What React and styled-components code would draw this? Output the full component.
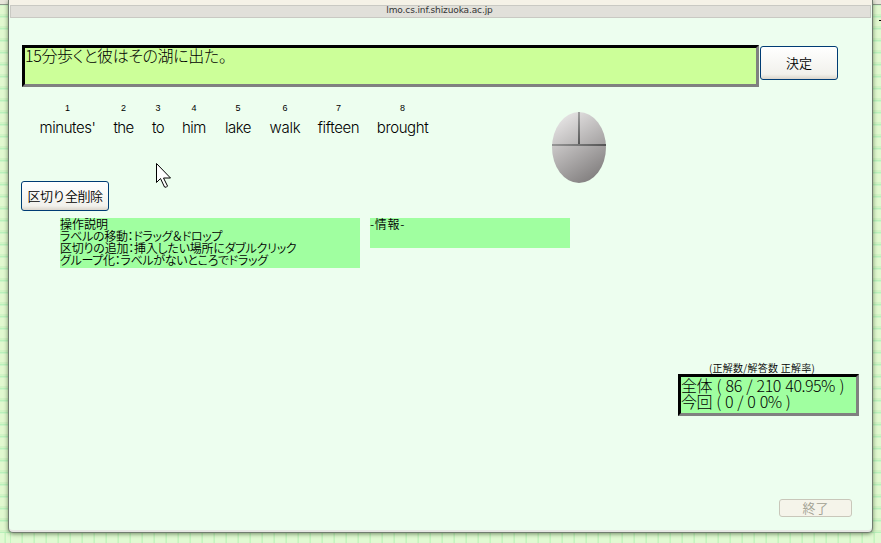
import React from "react";
import styled, { createGlobalStyle } from "styled-components";

const Global = createGlobalStyle`
  * { box-sizing: border-box; }
  html, body { margin: 0; height: 100%; overflow: hidden; }
  body { font-family: "Liberation Sans", "Noto Sans CJK JP", sans-serif; color: #000; }
`;

const Desktop = styled.div`
  height: 543px;
  width: 881px;
  overflow: hidden;
  padding: 0 8px 9px 8px;
  background:
    linear-gradient(#e8e5da, #e8e5da) 0 0 / 100% 4px no-repeat,
    linear-gradient(#8f978b, #8f978b) 0 4px / 100% 1px no-repeat,
    linear-gradient(#000, #000) 879px 20px / 2px 1px no-repeat,
    repeating-linear-gradient(#b9f1bb 0 1px, #cdf5c8 1px 2px, #e1f8cf 2px 10px, #d2f4c5 10px 12px) 0 4px / 100% 529px no-repeat,
    repeating-linear-gradient(90deg, #c4f4bf 0 1px, #e0fad2 1px 11px, #d1f5c5 11px 12px) 10px 0;
`;

const Window = styled.main`
  width: 865px;
  height: 533px;
  display: flex;
  flex-direction: column;
  background: #edfeef;
  border: 1px solid #727c70;
  border-top: 0;
  border-radius: 0 0 5px 5px;
  box-shadow: inset 0 -2px 0 #e6e8e4, 0 1px 4px rgba(50, 80, 40, 0.65);
`;

const TitleStrip = styled.div`height: 5px; background: #f5f2e7; flex: none;`;
const AddressBar = styled.header`
  height: 13px;
  flex: none;
  margin: 0 1px;
  padding: 0 2px 3px 0;
  border: 1px solid #c9c9c3;
  background: #e1e0da;
  display: flex;
  justify-content: center;
  align-items: center;
  color: #333;
`;
const Label = styled.span`
  display: inline-block;
  white-space: nowrap;
  font-family: ${(p) => p.$font || '"Noto Sans CJK JP", sans-serif'};
  font-size: ${(p) => p.$size || 12}px;
  line-height: ${(p) => p.$line || 12}px;
  letter-spacing: ${(p) => p.$track || 0}px;
  word-spacing: ${(p) => p.$gap || 0}px;
  font-weight: ${(p) => p.$weight || 350};
  font-feature-settings: ${(p) => (p.$palt ? '"palt"' : "normal")};
`;

const Inset = styled.div`
  border: 3px solid;
  border-color: #000 #808080 #808080 #000;
  background: ${(p) => p.$fill};
  width: ${(p) => p.$width}px;
  height: 42px;
  display: flex;
  flex-direction: column;
`;
const QuestionRow = styled.section`
  display: flex;
  gap: 1px;
  margin: 27px 0 0 13px;
  align-items: flex-start;
`;
const Button = styled.button`
  padding: 0;
  width: ${(p) => p.$width}px;
  height: ${(p) => p.$height}px;
  margin: ${(p) => p.$margin || 0};
  border: 1px solid #003c74;
  border-radius: 3px;
  background: linear-gradient(#fff, #f2f1ec 85%, #dbd6cc);
  color: #000;
  display: flex;
  align-items: center;
  justify-content: center;
  flex: none;
  &:disabled { border-color: #c9c7ba; background: #f5f4ea; color: #a1a192; }
`;

const WordArea = styled.section`
  display: flex;
  height: 94px;
  padding: 16px 0 0 31px;
  flex: none;
`;
const Words = styled.div`display: flex; gap: 16px; width: 512px;`;
const Word = styled.div`
  width: ${(p) => p.$width}px;
  margin-left: -1px;
  margin-right: 1px;
  display: flex;
  flex-direction: column;
  align-items: center;
`;
const MouseIcon = styled.svg`width: 54px; height: 72px; margin-top: 8px; flex: none;`;
const Pointer = styled.svg`position: absolute; left: 156px; top: 163px; width: 16px; height: 25px;`;

const InfoRow = styled.section`display: flex; gap: 10px; align-items: flex-start; margin: 7px 0 0 51px;`;
const InfoBox = styled.div`
  width: ${(p) => p.$width}px;
  height: ${(p) => p.$height}px;
  background: #a0ffa0;
  display: flex;
  flex-direction: column;
  align-items: flex-start;
`;
const Score = styled.section`
  width: 181px;
  margin: 94px 13px 0 auto;
  display: flex;
  flex-direction: column;
  align-items: flex-start;
`;
const ScoreCaption = styled.div`height: 12px; padding-left: 31px; display: flex;`;
const Footer = styled.footer`display: flex; justify-content: flex-end; padding: 83px 20px 0 0;`;

const latin = '"Liberation Sans", Arial, sans-serif';
const light = 'Inter, "Liberation Sans", sans-serif';

const words = [
  ["minutes'", 57, -0.45], ["the", 23, -0.6], ["to", 14, -0.5], ["him", 26, -0.5],
  ["lake", 30, -0.5], ["walk", 32, -0.2], ["fifteen", 43, -0.35], ["brought", 53, -0.4],
];
const help = [
  ["操作説明", 0],
  ["ラベルの移動：ドラッグ＆ドロップ", -0.3],
  ["区切りの追加：挿入したい場所にダブルクリック", -0.23],
  ["グループ化：ラベルがないところでドラッグ", -0.3],
];

export default function App() {
  return (
    <Desktop>
      <Global />
      <Window>
        <TitleStrip />
        <AddressBar><Label $size={9} $line={10} $weight={400} $font='"DejaVu Sans", sans-serif' $track={-0.12}>lmo.cs.inf.shizuoka.ac.jp</Label></AddressBar>
        <QuestionRow>
          <Inset $fill="#ccff99" $width={737}>
            <Label $size={16} $line={15} $weight={300} $track={-0.35} $palt>15分歩くと彼はその湖に出た。</Label>
          </Inset>
          <Button $width={78} $height={34} $margin="1px 0 0"><Label $size={13}>決定</Label></Button>
        </QuestionRow>
        <WordArea>
          <Words>
            {words.map(([word, width, track], i) => (
              <Word key={word} $width={width}>
                <Label $size={9} $line={11} $font={latin}>{i + 1}</Label>
                <Label $size={15} $line={27} $weight={300} $track={track} $font={light}>{word}</Label>
              </Word>
            ))}
          </Words>
          <MouseIcon viewBox="0 0 54 72">
            <defs>
              <linearGradient id="shell" x1="0.2" y1="0" x2="0.7" y2="1">
                <stop offset="0" stopColor="#eae8e8" /><stop offset="1" stopColor="#817e7e" />
              </linearGradient>
              <linearGradient id="seam" gradientUnits="userSpaceOnUse" x1="0" y1="0" x2="54" y2="0">
                <stop offset="0" stopColor="#969696" /><stop offset="1" stopColor="#545454" />
              </linearGradient>
              <linearGradient id="divider" gradientUnits="userSpaceOnUse" x1="0" y1="0" x2="0" y2="34">
                <stop offset="0" stopColor="#a0a0a0" /><stop offset="1" stopColor="#555" />
              </linearGradient>
            </defs>
            <ellipse cx="27" cy="36.5" rx="27" ry="35.5" fill="url(#shell)" />
            <path d="M26 1h2v33h-2z" fill="url(#divider)" />
            <path d="M0 33h54v2H0z" fill="url(#seam)" />
          </MouseIcon>
        </WordArea>
        <Button $width={88} $height={30} $margin="0 0 0 12px"><Label $size={13} $track={-0.5}>区切り全削除</Label></Button>
        <InfoRow>
          <InfoBox $width={300} $height={50}>
            {help.map(([text, track]) => <Label key={text} $palt $track={track}>{text}</Label>)}
          </InfoBox>
          <InfoBox $width={200} $height={30}><Label $track={0.7}>-情報-</Label></InfoBox>
        </InfoRow>
        <Score>
          <ScoreCaption><Label $size={10} $track={0.25} $palt>(正解数/解答数 正解率)</Label></ScoreCaption>
          <Inset $fill="#a0ffa0" $width={181}>
            <Label $size={16} $line={16} $weight={300} $track={-0.5} $gap={1.5}>全体 ( 86 / 210 40.95% )</Label>
            <Label $size={16} $line={16} $weight={300} $track={-0.5} $gap={1.2}>今回 ( 0 / 0 0% )</Label>
          </Inset>
        </Score>
        <Footer><Button disabled $width={73} $height={18}><Label $size={13}>終了</Label></Button></Footer>
      </Window>
      <Pointer viewBox="0 0 16 25">
        <path d="M.5.5v19l4-4 4 8.5q2 1 3-1l-4-8h7z" fill="#fff" stroke="#000" />
      </Pointer>
    </Desktop>
  );
}
